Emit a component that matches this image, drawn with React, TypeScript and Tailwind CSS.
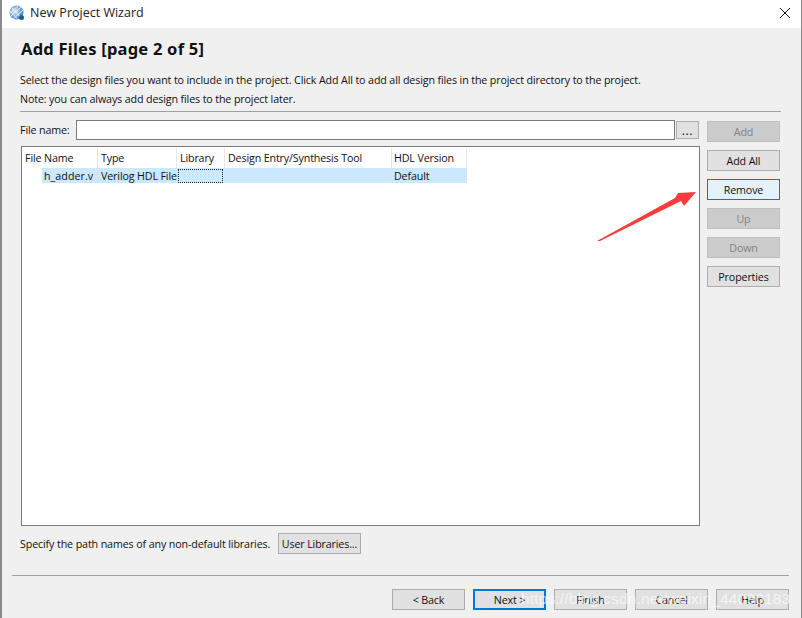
import React from "react";

function Btn({ label, state = "normal", className = "" }: { label: string; state?: "normal" | "disabled" | "hot" | "default"; className?: string }) {
  const cls =
    state === "disabled"
      ? "bg-[#cccccc] border border-[#bfbfbf] text-[#838383]"
      : state === "hot"
      ? "bg-[#e5f1fb] border border-[#0078d7] text-[#111111]"
      : state === "default"
      ? "bg-[#e1e1e1] border-2 border-[#0078d7] text-[#111111]"
      : "bg-[#e1e1e1] border border-[#adadad] text-[#111111]";
  return (
    <div className={`h-[21px] pt-[1px] flex items-center justify-center text-[10.7px] tracking-[-0.14px] leading-none whitespace-nowrap ${className || "w-[73px]"} ${cls}`}>
      {label}
    </div>
  );
}

function Head({ w, label, pl = "pl-[3px]" }: { w: string; label: string; pl?: string }) {
  return (
    <div className={`${w} h-[20px] flex items-center ${pl} border-r border-[#e5e5e5] shrink-0 whitespace-nowrap`}>{label}</div>
  );
}

export default function App() {
  return (
    <div className="relative w-[802px] h-[618px] overflow-hidden bg-[#f0f0f0] text-[10.7px] text-[#111111] border-l-2 border-r border-[#8a8a8a] font-['Open_Sans',sans-serif]">
      <div className="h-[28px] bg-white flex items-center -ml-[2px] pl-[9px] pr-[10px] pb-[3px]">
        <svg width="16" height="16" viewBox="0 0 16 16" className="shrink-0">
          <defs>
            <radialGradient id="g" cx="0.4" cy="0.4" r="0.7">
              <stop offset="0" stopColor="#d6e8f7" />
              <stop offset="1" stopColor="#2e74b5" />
            </radialGradient>
          </defs>
          <circle cx="7.5" cy="7.5" r="7" fill="url(#g)" />
          <path d="M1 8 L9 1 M2 11 L12 2 M4 14 L14 5 M3 3 L12 13 M1 6 L9 14.5" stroke="#fff" strokeWidth="0.7" fill="none" />
          <circle cx="12.5" cy="12.5" r="2.5" fill="#1b5e9b" />
        </svg>
        <span className="ml-[5px] pt-[2px] text-[12.5px] text-[#222222]">New Project Wizard</span>
        <svg width="12" height="12" viewBox="0 0 12 12" className="ml-auto">
          <path d="M1 1 L11 11 M11 1 L1 11" stroke="#111" strokeWidth="1" fill="none" />
        </svg>
      </div>

      <div className="pl-[18px] pr-[20px]">
        <div className="pt-[11px] pl-px h-[44px] text-[16.5px] font-bold leading-[20px] text-[#111111] font-['Noto_Sans',sans-serif] tracking-[0.23px]">
          Add Files [page 2 of 5]
        </div>
        <div className="h-[19px] leading-[16px] whitespace-nowrap tracking-[-0.13px]">
          Select the design files you want to include in the project. Click Add All to add all design files in the project directory to the project.
        </div>
        <div className="h-[19px] leading-[16px] whitespace-nowrap tracking-[-0.13px]">
          Note: you can always add design files to the project later.
        </div>
        <div className="h-px bg-[#a0a0a0] mt-[1px]" />
        <div className="flex mt-[8px]">
          <div className="w-[680px] shrink-0">
            <div className="flex items-center h-[20px]">
              <span className="w-[56px] shrink-0 tracking-[-0.14px]">File name:</span>
              <div className="w-[599px] h-[20px] bg-white border border-[#7a7a7a]" />
              <div className="ml-px w-[23px] h-[18px] bg-[#e1e1e1] border border-[#adadad] flex items-center justify-center pt-[1px] text-[12px] tracking-[0.6px]">...</div>
            </div>
            <div className="ml-[1px] mt-[6px] h-[380px] w-[679px] bg-white border border-[#7a7a7a] pt-[1px] pl-[1px] tracking-[-0.14px]">
              <div className="flex">
                <Head w="w-[75px]" label="File Name" pl="pl-[2px]" />
                <Head w="w-[79px]" label="Type" />
                <Head w="w-[48px]" label="Library" pl="pl-[3px]" />
                <Head w="w-[167px]" label="Design Entry/Synthesis Tool" pl="pl-[3px]" />
                <Head w="w-[75px]" label="HDL Version" pl="pl-[2px]" />
              </div>
              <div className="flex h-[15px] items-center">
                <div className="w-[19px] shrink-0" />
                <div className="w-[56px] h-full shrink-0 bg-[#cce8ff] pl-[2px] pt-[1px] leading-[15px] tracking-[0.05px]">h_adder.v</div>
                <div className="w-[79px] h-full shrink-0 bg-[#cce8ff] pl-[3px] pt-[1px] leading-[15px] whitespace-nowrap">Verilog HDL File</div>
                <div className="w-[48px] h-full shrink-0 bg-[#cce8ff] p-px">
                  <div className="w-[45px] h-[14px] border border-dotted border-[#222222]" />
                </div>
                <div className="w-[167px] h-full shrink-0 bg-[#cce8ff]" />
                <div className="w-[75px] h-full shrink-0 bg-[#cce8ff] pl-[2px] pt-[1px] leading-[15px]">Default</div>
              </div>
            </div>
            <div className="flex items-center mt-[7px] h-[21px]">
              <span className="w-[258px] shrink-0 tracking-[-0.12px] whitespace-nowrap pt-[1px]">Specify the path names of any non-default libraries.</span>
              <Btn label="User Libraries..." className="w-[83px]" />
            </div>
          </div>
          <div className="ml-[7px] flex flex-col gap-[8px] pt-[1px]">
            <Btn label="Add" state="disabled" />
            <Btn label="Add All" />
            <Btn label="Remove" state="hot" />
            <Btn label="Up" state="disabled" />
            <Btn label="Down" state="disabled" />
            <Btn label="Properties" />
          </div>
        </div>
      </div>

      <div className="ml-[10px] mr-[12px] h-px bg-[#a0a0a0] mt-[21px]" />
      <div className="flex justify-end gap-[8px] pr-[12px] mt-[13px]">
        <Btn label="< Back" />
        <Btn label="Next >" state="default" />
        <Btn label="Finish" />
        <Btn label="Cancel" />
        <Btn label="Help" />
      </div>

      <svg width="802" height="618" className="absolute -left-[2px] top-0 pointer-events-none">
        <polygon points="597,241 675,198 678,193 696,192 684,206 681,201 600,241" fill="#fb3b3b" />
      </svg>
      <div className="absolute left-[519px] top-[589px] text-[15.5px] leading-[20px] tracking-[0.15px] text-white/70 whitespace-nowrap font-['Liberation_Sans',sans-serif]">
        https://blog.csdn.net/weixin_44090183
      </div>
    </div>
  );
}
